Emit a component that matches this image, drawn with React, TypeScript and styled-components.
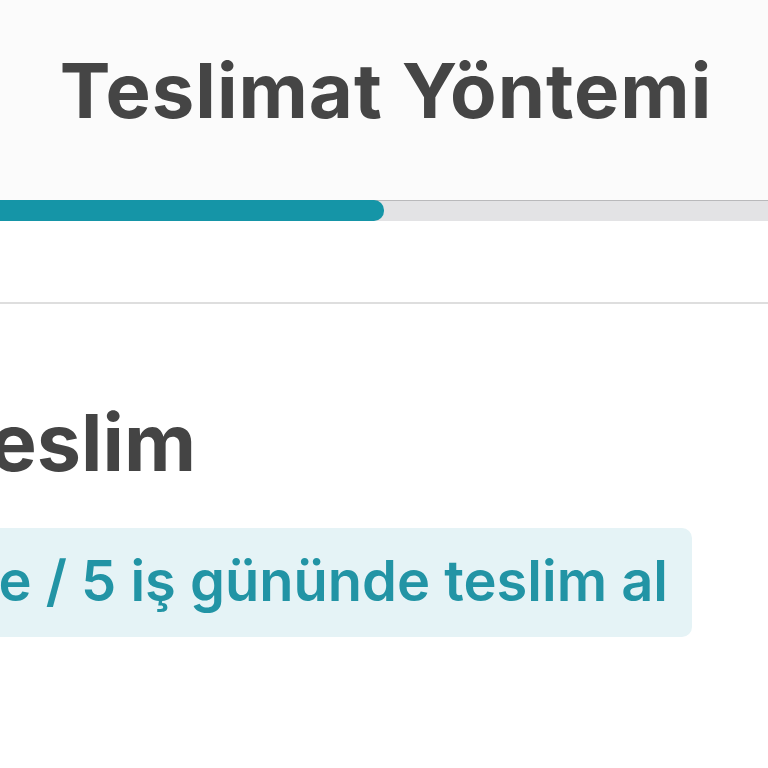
import React from "react";
import styled, { createGlobalStyle } from "styled-components";

const GlobalStyle = createGlobalStyle`
  html, body {
    margin: 0;
    padding: 0;
    background: #ffffff;
  }
  body {
    font-family: Inter, "Noto Sans", sans-serif;
    overflow: hidden;
  }
`;

const Page = styled.div`
  width: 768px;
  height: 768px;
  overflow: hidden;
  display: flex;
  flex-direction: column;
`;

const Header = styled.header`
  height: 200px;
  background: #fbfbfb;
  display: flex;
  align-items: flex-start;
  justify-content: center;
  box-sizing: border-box;
  padding: 44px 0 0 4px;
`;

const Title = styled.h1`
  margin: 0;
  font-size: 76px;
  line-height: 92px;
  font-weight: 700;
  color: #454545;
  letter-spacing: 1px;
  white-space: nowrap;
`;

const Track = styled.div`
  height: 20px;
  background: #e3e3e5;
  border-top: 1px solid #b9b9bb;
  display: flex;
`;

const Fill = styled.div`
  height: 21px;
  margin-top: -1px;
  background: #1595a7;
  border-radius: 0 10px 10px 0;
`;

const Divider = styled.div`
  margin-top: 81px;
  height: 2px;
  background: #dedede;
`;

const Section = styled.section`
  display: flex;
  flex-direction: column;
  padding-top: 92px;
`;

const EndRow = styled.div<{ $width: number }>`
  width: ${(p) => p.$width}px;
  display: flex;
  justify-content: flex-end;
`;

const OptionName = styled.h2`
  margin: 0;
  font-size: 79px;
  line-height: 92px;
  font-weight: 700;
  color: #444444;
  letter-spacing: 0;
  white-space: nowrap;
  flex-shrink: 0;
`;

const Badge = styled.div`
  margin-top: 40px;
  flex-shrink: 0;
  height: 109px;
  box-sizing: border-box;
  display: flex;
  align-items: center;
  padding: 0 24px 4px 28px;
  background: #e5f3f6;
  border-radius: 10px;
  color: #2294a5;
  font-size: 56px;
  font-weight: 600;
  letter-spacing: 0;
  white-space: nowrap;
`;

const progress = 0.5;

export default function App() {
  return (
    <>
      <GlobalStyle />
      <Page>
        <Header>
          <Title>Teslimat Yöntemi</Title>
        </Header>
        <Track>
          <Fill style={{ width: `${progress * 100}%` }} />
        </Track>
        <Divider />
        <Section>
          <EndRow $width={196}>
            <OptionName>Mağazadan Teslim</OptionName>
          </EndRow>
          <EndRow $width={692}>
            <Badge>2 gün içinde / 5 iş gününde teslim al</Badge>
          </EndRow>
        </Section>
      </Page>
    </>
  );
}
